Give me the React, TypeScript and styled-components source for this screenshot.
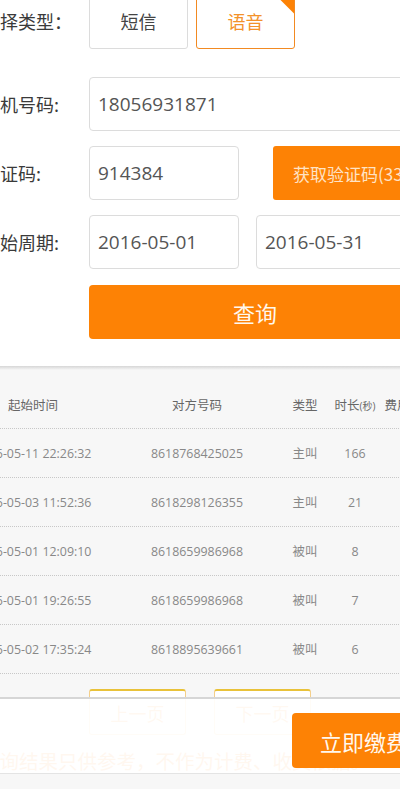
import React from 'react';
import styled, { createGlobalStyle } from 'styled-components';

const GlobalStyle = createGlobalStyle`
  html, body {
    margin: 0;
    padding: 0;
    background: #f7f7f7;
  }
  body {
    font-family: "Open Sans", "Noto Sans CJK SC", sans-serif;
  }
`;

const ORANGE = '#fd8205';

const Page = styled.div`
  position: relative;
  width: 400px;
  height: 789px;
  overflow: hidden;
  background: #f7f7f7;
`;

const TopSection = styled.div`
  background: #fff;
  padding-bottom: 27px;
`;

const Form = styled.div`
  display: flex;
  flex-direction: column;
  gap: 15px;
  margin-top: -6px;
  margin-left: -18px;
`;

const Row = styled.div<{ $gapAfter?: number }>`
  display: flex;
  align-items: center;
  height: 54px;
  flex-shrink: 0;
  margin-bottom: ${(p) => p.$gapAfter ?? 0}px;
`;

const Label = styled.div`
  width: 107px;
  flex-shrink: 0;
  font-family: "Noto Sans CJK SC", sans-serif;
  font-size: 18px;
  color: #3a3a3a;
  white-space: nowrap;
`;

const TypeOption = styled.div<{ $active?: boolean }>`
  position: relative;
  box-sizing: border-box;
  width: 99px;
  height: 55px;
  margin-right: 8px;
  flex-shrink: 0;
  display: flex;
  align-items: center;
  justify-content: center;
  border: ${(p) => (p.$active ? `1.5px solid #f28a22` : '1px solid #dcdcdc')};
  border-radius: 3px;
  font-family: "Noto Sans CJK SC", sans-serif;
  font-size: 18px;
  color: ${(p) => (p.$active ? '#f3922a' : '#444')};
  overflow: hidden;

  &::after {
    content: '';
    display: ${(p) => (p.$active ? 'block' : 'none')};
    position: absolute;
    top: 0;
    right: 0;
    width: 19px;
    height: 19px;
    background: ${ORANGE};
    clip-path: polygon(0 0, 100% 0, 100% 100%);
  }
`;

const Field = styled.div<{ $width: number }>`
  box-sizing: border-box;
  width: ${(p) => p.$width}px;
  height: 54px;
  flex-shrink: 0;
  display: flex;
  align-items: center;
  padding-left: 8px;
  border: 1px solid #dcdcdc;
  border-radius: 4px;
  background: #fff;
  font-size: 19px;
  color: #555;
  white-space: nowrap;
`;

const CodeButton = styled.div`
  box-sizing: border-box;
  width: 150px;
  height: 54px;
  margin-left: 34px;
  flex-shrink: 0;
  display: flex;
  align-items: center;
  padding-left: 20px;
  border-radius: 3px;
  background: ${ORANGE};
  font-family: "Noto Sans CJK SC", sans-serif;
  font-size: 17px;
  color: #ffe3c6;
  white-space: nowrap;
`;

const QueryButton = styled.div`
  box-sizing: border-box;
  width: 332px;
  height: 54px;
  margin-top: 1px;
  margin-left: 107px;
  flex-shrink: 0;
  display: flex;
  align-items: center;
  justify-content: center;
  border-radius: 4px;
  background: ${ORANGE};
  font-family: "Noto Sans CJK SC", sans-serif;
  font-size: 22px;
  color: #fff8ee;
`;

const Shade = styled.div`
  height: 4px;
  background: linear-gradient(#d6d6d6, #f7f7f7);
`;

const Table = styled.div`
  margin-top: 11px;
  margin-left: -47px;
  width: 480px;
`;

const TableRow = styled.div<{ $head?: boolean }>`
  display: grid;
  grid-template-columns: 160px 168px 48px 52px 32px;
  align-items: center;
  height: ${(p) => (p.$head ? 47 : 48)}px;
  border-bottom: 1px dotted #c8c8c8;
  font-size: ${(p) => (p.$head ? 12.5 : 12.4)}px;
  color: ${(p) => (p.$head ? '#666' : '#888')};
`;

const Cell = styled.div`
  text-align: center;
  white-space: nowrap;
`;

const Small = styled.span`
  font-size: 10px;
`;

const Pager = styled.div`
  display: flex;
  gap: 28px;
  margin-top: 15px;
  margin-left: 89px;
`;

const PageButton = styled.div`
  box-sizing: border-box;
  width: 97px;
  height: 46px;
  display: flex;
  align-items: center;
  justify-content: center;
  border: 1px solid #f4cf8a;
  border-top: 2px solid #e9c23a;
  border-radius: 3px;
  background: #fff;
  font-family: "Noto Sans CJK SC", sans-serif;
  font-size: 18px;
  color: #f59a3a;
`;

const Note = styled.div`
  margin-top: 14px;
  margin-left: -20px;
  font-family: "Noto Sans CJK SC", sans-serif;
  font-size: 19.5px;
  line-height: 24px;
  color: #f58a1f;
  white-space: nowrap;
`;

const BottomBar = styled.div`
  position: absolute;
  left: 0;
  right: 0;
  top: 697px;
  height: 77px;
  box-sizing: border-box;
  display: flex;
  justify-content: flex-end;
  padding-top: 14px;
  background: rgba(255, 255, 255, 0.93);
  border-top: 2px solid #d6d6d6;
  border-bottom: 1px solid #e4e4e4;
`;

const PayButton = styled.div`
  box-sizing: border-box;
  width: 140px;
  height: 55px;
  margin-right: -32px;
  display: flex;
  align-items: center;
  padding-left: 28px;
  border-radius: 4px;
  background: ${ORANGE};
  font-family: "Noto Sans CJK SC", sans-serif;
  font-size: 22px;
  color: #fff8ee;
  white-space: nowrap;
`;

const records = [
  { time: '2016-05-11 22:26:32', peer: '8618768425025', type: '主叫', secs: 166 },
  { time: '2016-05-03 11:52:36', peer: '8618298126355', type: '主叫', secs: 21 },
  { time: '2016-05-01 12:09:10', peer: '8618659986968', type: '被叫', secs: 8 },
  { time: '2016-05-01 19:26:55', peer: '8618659986968', type: '被叫', secs: 7 },
  { time: '2016-05-02 17:35:24', peer: '8618895639661', type: '被叫', secs: 6 },
];

const App = () => {
  return (
    <Page>
      <GlobalStyle />
      <TopSection>
        <Form>
          <Row $gapAfter={14}>
            <Label>选择类型：</Label>
            <TypeOption>短信</TypeOption>
            <TypeOption $active>语音</TypeOption>
          </Row>
          <Row>
            <Label>手机号码:</Label>
            <Field $width={332}>18056931871</Field>
          </Row>
          <Row>
            <Label>验证码:</Label>
            <Field $width={150}>914384</Field>
            <CodeButton>获取验证码(33)</CodeButton>
          </Row>
          <Row>
            <Label>起始周期:</Label>
            <Field $width={150}>2016-05-01</Field>
            <Field $width={150} style={{ marginLeft: 17 }}>2016-05-31</Field>
          </Row>
          <QueryButton>查询</QueryButton>
        </Form>
      </TopSection>
      <Shade />
      <Table>
        <TableRow $head>
          <Cell>起始时间</Cell>
          <Cell>对方号码</Cell>
          <Cell>类型</Cell>
          <Cell>时长<Small>(秒)</Small></Cell>
          <Cell>费用</Cell>
        </TableRow>
        {records.map((r) => (
          <TableRow key={r.time}>
            <Cell>{r.time}</Cell>
            <Cell>{r.peer}</Cell>
            <Cell>{r.type}</Cell>
            <Cell>{r.secs}</Cell>
            <Cell />
          </TableRow>
        ))}
      </Table>
      <Pager>
        <PageButton>上一页</PageButton>
        <PageButton>下一页</PageButton>
      </Pager>
      <Note>查询结果只供参考，不作为计费、收费依据。</Note>
      <BottomBar>
        <PayButton>立即缴费</PayButton>
      </BottomBar>
    </Page>
  );
};

export default App;
